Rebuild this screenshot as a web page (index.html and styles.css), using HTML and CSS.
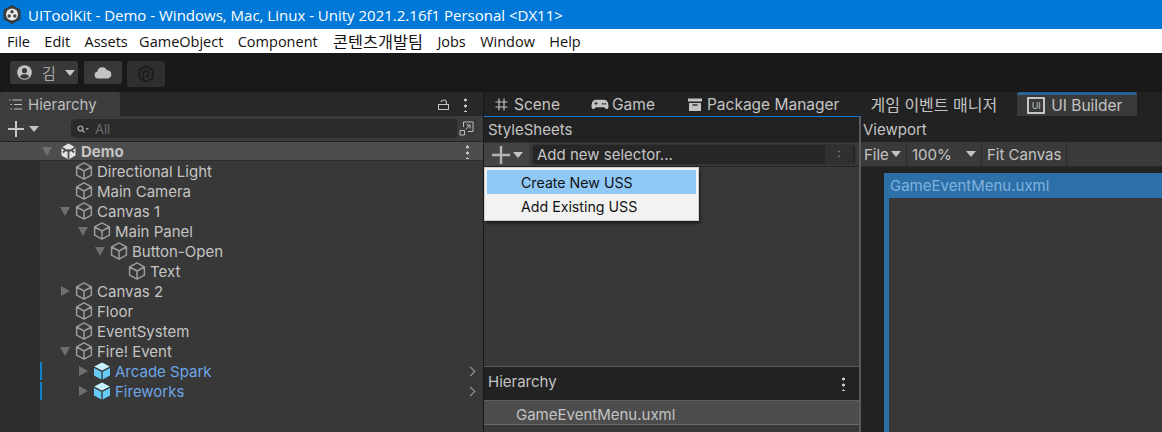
FILE: index.html
```html
<!DOCTYPE html>
<html lang="en">
<head>
    <meta charset="UTF-8">
    <title>UIToolKit - Demo - Unity</title>
    <link rel="stylesheet" href="styles.css">
</head>
<body>
    <svg class="defs" width="0" height="0">
        <symbol id="cube" viewBox="0 0 18 18">
            <path d="M9 .9 16.400 4.900V13.100L9 17.100 1.600 13.100V4.900Z M1.800 5 9 9 16.200 5 M9 9V17" fill="none" stroke="currentColor" stroke-width="1.500" stroke-linejoin="round"/>
        </symbol>
        <symbol id="prefab" viewBox="0 0 18 18">
            <path d="M9 .5 16.800 4.600 9 8.500 1.200 4.600Z" fill="#c4f0ff"/>
            <path d="M1 6 8.300 9.700V17.500L1 13.600Z M17 6 9.700 9.700V17.500L17 13.600Z" fill="#66cbf7"/>
        </symbol>
    </svg>

    <div class="titlebar">
        <svg class="app-icon" width="18" height="19" viewBox="0 0 18 19">
            <path d="M9 0 17.500 4.700v9.600L9 19 .5 14.300V4.700Z" fill="#3a3a3a"/>
            <circle cx="9" cy="9.500" r="6" fill="#e8e8e8"/>
            <circle cx="9" cy="6.700" r="1.700" fill="#444"/>
            <circle cx="6.200" cy="11" r="1.700" fill="#444"/>
            <circle cx="11.800" cy="11" r="1.700" fill="#444"/>
        </svg>
        <span>UIToolKit - Demo - Windows, Mac, Linux - Unity 2021.2.16f1 Personal &lt;DX11&gt;</span>
    </div>

    <div class="menubar">
        <span>File</span><span>Edit</span><span class="menu-assets">Assets</span><span>GameObject</span><span>Component</span><span class="menu-ko">콘텐츠개발팀</span><span>Jobs</span><span>Window</span><span>Help</span>
    </div>

    <div class="toolbar">
        <div class="tool-btn account">
            <svg width="15" height="15" viewBox="0 0 16 16">
                <circle cx="8" cy="8" r="7.800" fill="#c4c4c4"/>
                <circle cx="8" cy="6" r="2.700" fill="#3a3a3a"/>
                <path d="M3 12.600C4 10 6 9.800 8 9.800s4 .2 5 2.800A7 7 0 0 1 3 12.600Z" fill="#3a3a3a"/>
            </svg>
            <span class="account-name">김</span>
            <i class="caret"></i>
        </div>
        <div class="tool-btn cloud">
            <svg width="18" height="13" viewBox="0 0 18 12">
                <path d="M4 12A3.600 3.600 0 0 1 3.400 4.900 5 5 0 0 1 12.900 3.700 4.200 4.200 0 0 1 14 12Z" fill="#c4c4c4"/>
            </svg>
        </div>
        <div class="tool-btn plastic">
            <svg width="16" height="18" viewBox="0 0 16 18">
                <path d="M8 1.200 14.600 5v8L8 16.800 1.400 13V5Z M5.400 14.600V7.200L8 5.700l2.600 1.500v3L8 11.700" fill="none" stroke="#1b1b1b" stroke-width="1.800"/>
            </svg>
        </div>
    </div>

    <div class="workspace">
        <section class="hierarchy-panel">
            <div class="tabstrip">
                <div class="tab tab-active">
                    <svg width="13" height="11" viewBox="0 0 13 11">
                        <path d="M0 1h1.500M1.500 5.500h1.500M1.500 10h1.500M3.500 1H13M5 5.500H13M5 10H13" fill="none" stroke="#bdbdbd" stroke-width="1.200"/>
                    </svg>
                    Hierarchy
                </div>
                <div class="tab-tools">
                    <svg width="11" height="11" viewBox="0 0 11 11">
                        <path d="M.5 5.500H10.500V10.500H.5Z M3 3A2.800 2.500 0 0 1 8.400 2.800V5.500" fill="none" stroke="#c4c4c4" stroke-width="1.100"/>
                    </svg>
                    <i class="dots"></i>
                </div>
            </div>
            <div class="search-row">
                <div class="plus-menu">
                    <svg width="16" height="16" viewBox="0 0 16 16"><path d="M8 0V16M0 8H16" stroke="#c8c8c8" stroke-width="2"/></svg>
                    <i class="caret"></i>
                </div>
                <div class="search-box">
                    <svg width="12" height="8" viewBox="0 0 12 8">
                        <circle cx="3.500" cy="3.500" r="2.400" fill="none" stroke="#a0a0a0" stroke-width="1.400"/>
                        <path d="M5 5 7.500 7.500" stroke="#a0a0a0" stroke-width="1.400"/>
                        <path d="M8.500 3h3.500L10.200 5Z" fill="#a0a0a0"/>
                    </svg>
                    <span>All</span>
                </div>
                <div class="search-end">
                    <svg width="15" height="15" viewBox="0 0 15 15">
                        <path d="M4.500 6V1H14V10.500H9 M1 9.500H5.500V14H1Z M6.500 8.500 11 4 M7.500 4H11V7.500" fill="none" stroke="#bdbdbd" stroke-width="1"/>
                    </svg>
                </div>
            </div>
            <div class="scene-row">
                <i class="arrow-down"></i>
                <svg width="17" height="17" viewBox="0 0 17 17">
                    <path d="M8.500.5 15.500 4.500V12.500L8.500 16.500 1.500 12.500V4.500Z" fill="#e4e4e4"/>
                    <path d="M8.500 6V16M1.500 4.500 8.500 8.500 15.500 4.500 M3 9.500 6 6.500 M14 9.500 11 6.500" stroke="#4d4d4d" stroke-width="1.800" fill="none"/>
                </svg>
                <span>Demo</span>
                <i class="dots"></i>
            </div>
            <div class="tree">
                <div class="node depth-1"><svg class="ico"><use href="#cube"/></svg>Directional Light</div>
                <div class="node depth-1"><svg class="ico"><use href="#cube"/></svg>Main Camera</div>
                <div class="node depth-1"><i class="arrow-down"></i><svg class="ico"><use href="#cube"/></svg>Canvas 1</div>
                <div class="node depth-2"><i class="arrow-down"></i><svg class="ico"><use href="#cube"/></svg>Main Panel</div>
                <div class="node depth-3"><i class="arrow-down"></i><svg class="ico"><use href="#cube"/></svg>Button-Open</div>
                <div class="node depth-4"><svg class="ico"><use href="#cube"/></svg>Text</div>
                <div class="node depth-1"><i class="arrow-right"></i><svg class="ico"><use href="#cube"/></svg>Canvas 2</div>
                <div class="node depth-1"><svg class="ico"><use href="#cube"/></svg>Floor</div>
                <div class="node depth-1"><svg class="ico"><use href="#cube"/></svg>EventSystem</div>
                <div class="node depth-1"><i class="arrow-down"></i><svg class="ico"><use href="#cube"/></svg>Fire! Event</div>
                <div class="node depth-2 prefab"><i class="arrow-right"></i><svg class="ico"><use href="#prefab"/></svg>Arcade Spark<i class="chevron"></i></div>
                <div class="node depth-2 prefab"><i class="arrow-right"></i><svg class="ico"><use href="#prefab"/></svg>Fireworks<i class="chevron"></i></div>
            </div>
        </section>

        <section class="builder-panel">
            <div class="tabstrip builder-tabs">
                <div class="tab tab-scene">
                    <svg width="13" height="13" viewBox="0 0 13 13"><path d="M4 .5V12.500M9 .5V12.500M.5 4H12.500M.5 9H12.500" stroke="#c4c4c4" stroke-width="1.200"/></svg>
                    Scene
                </div>
                <div class="tab tab-game">
                    <svg width="18" height="11" viewBox="0 0 19 11">
                        <path d="M5 .5H14C17 .5 18.500 4 18.500 7.500 18.500 11 15.500 11 14 8.500H5C3.500 11 .5 11 .5 7.500.5 4 2 .5 5 .5Z" fill="#c4c4c4"/>
                        <path d="M3.500 4.500H7M5.250 2.700V6.300" stroke="#333" stroke-width="1.100"/>
                        <circle cx="12.500" cy="4.800" r="1" fill="#333"/><circle cx="15" cy="4.800" r="1" fill="#333"/>
                    </svg>
                    Game
                </div>
                <div class="tab tab-pm">
                    <svg width="14" height="13" viewBox="0 0 14 13"><path d="M0 .5H14V3.500H0Z M1 5H13V13H1Z" fill="#c4c4c4"/><path d="M4.500 7H9.500" stroke="#333" stroke-width="1.500"/></svg>
                    Package Manager
                </div>
                <div class="tab tab-events">게임 이벤트 매니저</div>
                <div class="tab tab-current">
                    <span class="ui-badge">UI</span>
                    UI Builder
                </div>
            </div>
            <div class="builder-body">
                <div class="style-col">
                    <div class="pane-head">StyleSheets</div>
                    <div class="selector-row">
                        <div class="plus-menu">
                            <svg width="18" height="18" viewBox="0 0 18 18"><path d="M9 0V18M0 9H18" stroke="#b4b4b4" stroke-width="2.400"/></svg>
                            <i class="caret"></i>
                        </div>
                        <div class="selector-input">
                            <span>Add new selector...</span>
                            <span class="selector-grip">:</span>
                        </div>
                    </div>
                    <div class="style-empty"></div>
                    <div class="pane-head tree-head">
                        Hierarchy
                        <i class="dots"></i>
                    </div>
                    <div class="doc-row">GameEventMenu.uxml</div>
                    <div class="style-rest"></div>

                    <div class="popup">
                        <div class="popup-item popup-hover">Create New USS</div>
                        <div class="popup-item">Add Existing USS</div>
                    </div>
                </div>
                <div class="viewport-col">
                    <div class="pane-head">Viewport</div>
                    <div class="viewport-bar">
                        <div class="vp-btn vp-file">File<i class="caret"></i></div>
                        <div class="vp-btn vp-zoom">100%<i class="caret"></i></div>
                        <div class="vp-btn vp-fit">Fit Canvas</div>
                    </div>
                    <div class="canvas-area">
                        <div class="canvas-frame">
                            <div class="canvas-title">GameEventMenu.uxml</div>
                            <div class="canvas-inner"></div>
                        </div>
                    </div>
                </div>
            </div>
        </section>
    </div>
</body>
</html>
```

FILE: styles.css
```css
* {
    box-sizing: border-box;
}
body {
    margin: 0;
    display: flex;
    flex-direction: column;
    height: 432px;
    overflow: hidden;
    background-color: #191919;
    color: #c4c4c4;
    font-family: Inter, "Noto Sans CJK KR", sans-serif;
    font-size: 15px;
}
i {
    display: block;
    flex: none;
}
.defs {
    position: absolute;
}

.titlebar {
    height: 29px;
    flex: none;
    display: flex;
    align-items: center;
    gap: 7px;
    padding-left: 3px;
    background-color: #0078d7;
    color: #fff;
    font-family: "Open Sans", "Noto Sans CJK KR", sans-serif;
    font-size: 15px;
}
.menubar {
    height: 24px;
    flex: none;
    display: flex;
    align-items: center;
    gap: 14.400px;
    padding-left: 7px;
    background-color: #fff;
    color: #111;
    font-family: "Open Sans", "Noto Sans CJK KR", sans-serif;
    font-size: 14.500px;
}
.menu-assets {
    margin-right: -3px;
}
.menu-ko {
    margin-left: 1px;
    font-size: 16.300px;
}
.toolbar {
    height: 39px;
    flex: none;
    display: flex;
    align-items: flex-start;
    gap: 6px;
    padding: 8px 0 0 10px;
}
.tool-btn {
    height: 23px;
    display: flex;
    align-items: center;
    justify-content: center;
    background-color: #383838;
    border-radius: 2px;
}
.account {
    width: 68px;
    justify-content: flex-start;
    padding-left: 7px;
    gap: 10px;
}
.account-name {
    width: 13px;
    font-size: 15px;
    color: #a8a8a8;
}
.cloud {
    width: 38px;
}
.plastic {
    width: 38px;
    height: 26px;
    margin-left: -1px;
    border-radius: 3px;
    background-color: #2f2f2f;
}
.caret {
    width: 0;
    height: 0;
    border-left: 5px solid transparent;
    border-right: 5px solid transparent;
    border-top: 6px solid #c4c4c4;
}
.dots {
    width: 3px;
    height: 15px;
    background: radial-gradient(circle, #c4c4c4 1.400px, transparent 1.700px) 0 0 / 3px 6px;
}

.workspace {
    flex: 1;
    display: flex;
    min-height: 0;
}
.hierarchy-panel {
    width: 483px;
    flex: none;
    display: flex;
    flex-direction: column;
    background-color: #383838;
}
.tabstrip {
    height: 24px;
    flex: none;
    display: flex;
    align-items: stretch;
    background-color: #282828;
}
.tab {
    display: flex;
    align-items: center;
    color: #c4c4c4;
}
.tab-active {
    width: 120px;
    gap: 6px;
    padding-left: 9px;
    background-color: #3c3c3c;
    border-radius: 3px 3px 0 0;
    color: #bdbdbd;
}
.tab-tools {
    margin-left: auto;
    display: flex;
    align-items: center;
    gap: 15px;
    padding-right: 16px;
}
.search-row {
    height: 26px;
    flex: none;
    display: flex;
    align-items: center;
    padding-left: 8px;
    background-color: #3c3c3c;
    border-bottom: 1px solid #232323;
}
.plus-menu {
    width: 63px;
    display: flex;
    align-items: center;
    gap: 5px;
}
.search-box {
    width: 386px;
    height: 19px;
    display: flex;
    align-items: center;
    gap: 6px;
    padding-left: 6px;
    background-color: #2a2a2a;
    border-radius: 5px 0 0 5px;
    color: #6f6f6f;
    font-size: 13px;
}
.search-end {
    width: 19px;
    height: 19px;
    display: flex;
    align-items: center;
    justify-content: center;
    background-color: #3a3a3a;
}
.scene-row {
    height: 19px;
    flex: none;
    display: flex;
    align-items: center;
    gap: 4px;
    padding: 0 14px 0 42px;
    background-color: #4d4d4d;
    border-bottom: 1px solid #2e2e2e;
    color: #c4c4c4;
    font-weight: 700;
}
.scene-row .dots {
    margin-left: auto;
}
.scene-row svg {
    margin-left: 2px;
}
.tree {
    flex: 1;
    padding-left: 40px;
    background: linear-gradient(90deg, #2e2e2e 40px, #383838 40px);
}
.node {
    position: relative;
    height: 20px;
    display: flex;
    align-items: center;
    gap: 4px;
    color: #c4c4c4;
}
.ico {
    width: 18px;
    height: 18px;
    flex: none;
    color: #9c9c9c;
}
.depth-1 { padding-left: 35px; }
.depth-2 { padding-left: 53px; }
.depth-3 { padding-left: 70px; }
.depth-4 { padding-left: 88px; }
.arrow-down {
    width: 0;
    height: 0;
    margin-left: -15px;
    margin-right: 1px;
    border-left: 5px solid transparent;
    border-right: 5px solid transparent;
    border-top: 9px solid #6f6f6f;
}
.arrow-right {
    width: 0;
    height: 0;
    margin-left: -14px;
    margin-right: 1px;
    border-top: 5px solid transparent;
    border-bottom: 5px solid transparent;
    border-left: 9px solid #6f6f6f;
}
.scene-row .arrow-down {
    margin: 0 2px 0 0;
}
.prefab {
    color: #6ea5e6;
}
.prefab::before {
    content: "";
    position: absolute;
    left: 0;
    top: 1px;
    width: 2px;
    height: 18px;
    background-color: #0f81c8;
}
.chevron {
    width: 7px;
    height: 7px;
    margin-left: auto;
    margin-right: 9px;
    border-top: 1.500px solid #a0a0a0;
    border-right: 1.500px solid #a0a0a0;
    transform: rotate(45deg);
}

.builder-panel {
    flex: 1;
    margin-left: 1px;
    min-width: 0;
    display: flex;
    flex-direction: column;
}
.builder-tabs {
    background-color: #222;
    font-size: 15.500px;
}
.builder-tabs .tab {
    flex: none;
}
.tab-scene { gap: 6px; margin-left: 11px; }
.tab-game { gap: 3px; margin-left: 31px; }
.tab-pm { gap: 5px; margin-left: 33px; }
.tab-events {
    margin-left: 31px;
    font-size: 16px;
}
.builder-tabs .tab-current {
    width: 120px;
    gap: 6px;
    margin-left: 20px;
    padding-left: 10px;
    background-color: #3a3a3a;
    border-top: 3px solid #2a6496;
    border-radius: 3px 3px 0 0;
}
.ui-badge {
    width: 18px;
    height: 17px;
    flex: none;
    display: flex;
    align-items: center;
    justify-content: center;
    border: 2px solid #c4c4c4;
    font-size: 9px;
}
.builder-body {
    flex: 1;
    min-height: 0;
    display: flex;
}
.style-col {
    position: relative;
    width: 377px;
    flex: none;
    display: flex;
    flex-direction: column;
    background-color: #383838;
    border-top: 1px solid #1479d2;
    border-right: 2px solid #5a5a5a;
}
.pane-head {
    height: 25px;
    flex: none;
    display: flex;
    align-items: center;
    padding-left: 4px;
    background-color: #222;
    color: #c4c4c4;
}
.selector-row {
    height: 25px;
    flex: none;
    display: flex;
    align-items: center;
    background-color: #3a3a3a;
    border-top: 1px solid #303030;
    border-bottom: 1px solid #232323;
}
.selector-row .plus-menu {
    width: 45px;
    height: 100%;
    padding-left: 8px;
    gap: 3px;
    background-color: #444;
}
.selector-input {
    flex: 1;
    height: 21px;
    margin: 0 3px;
    display: flex;
    justify-content: space-between;
    align-items: center;
    padding: 0 2px 0 4px;
    background-color: #262626;
    border: 1px solid #333;
    border-radius: 3px;
    color: #c4c4c4;
}
.selector-grip {
    width: 28px;
    height: 100%;
    text-align: center;
    background-color: #303030;
    color: #8a8a8a;
    font-size: 12px;
}
.style-empty {
    height: 200px;
    flex: none;
    border-bottom: 1px solid #5a5a5a;
}
.style-col .tree-head {
    height: 33px;
    justify-content: space-between;
    padding: 0 14px 4px 4px;
}
.tree-head .dots {
    margin-top: 4px;
}
.doc-row {
    height: 25px;
    flex: none;
    padding: 4px 0 0 32px;
    background-color: #4d4d4d;
    border-top: 1px solid #5f5f5f;
    border-bottom: 1px solid #6a6a6a;
    color: #c4c4c4;
}
.style-rest {
    flex: 1;
}
.popup {
    position: absolute;
    left: 0;
    top: 50px;
    width: 215px;
    height: 54px;
    padding: 2px;
    background-color: #f2f2f2;
    border: 1px solid #d0d0d0;
    box-shadow: 1px 2px 3px rgba(0, 0, 0, 0.6);
    color: #111;
    font-size: 14.200px;
}
.popup-item {
    height: 24px;
    display: flex;
    align-items: center;
    padding-left: 34px;
}
.popup-hover {
    background-color: #90c8f6;
}
.viewport-col {
    flex: 1;
    min-width: 0;
    display: flex;
    flex-direction: column;
    background-color: #222;
}
.viewport-col .pane-head {
    height: 26px;
    padding-left: 2px;
}
.viewport-bar {
    height: 25px;
    flex: none;
    display: flex;
    background-color: #3a3a3a;
    border-bottom: 1px solid #2b2b2b;
}
.vp-btn {
    display: flex;
    align-items: center;
    border-right: 1px solid #2b2b2b;
}
.vp-file {
    width: 46px;
    gap: 2px;
    padding-left: 3px;
}
.vp-zoom {
    width: 75px;
    padding: 0 5px;
    justify-content: space-between;
}
.vp-fit {
    width: 85px;
    padding-left: 5px;
}
.canvas-area {
    flex: 1;
    min-height: 0;
    padding: 6px 0 0 23px;
}
.canvas-frame {
    height: 100%;
    display: flex;
    flex-direction: column;
    padding-left: 5px;
    background-color: #2d6fa8;
}
.canvas-title {
    height: 25px;
    flex: none;
    display: flex;
    align-items: center;
    color: #7fb2de;
    padding-left: 1px;
}
.canvas-inner {
    flex: 1;
    background-color: #383838;
}
```
